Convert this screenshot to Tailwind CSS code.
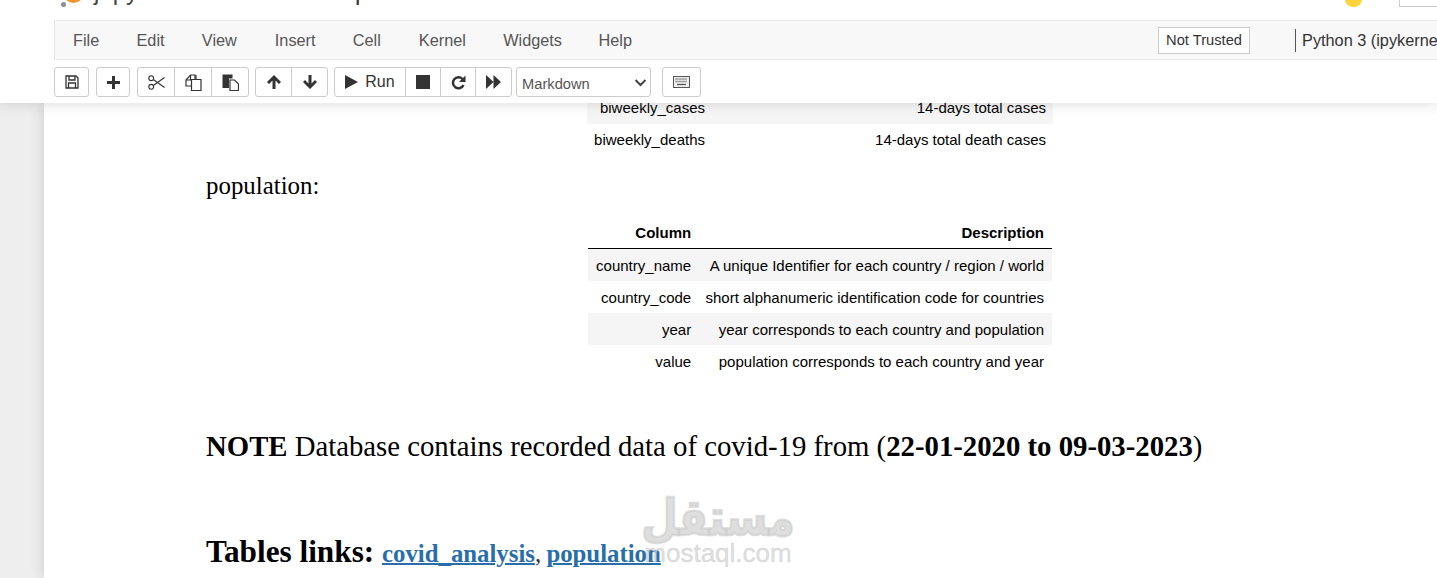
<!doctype html>
<html>
<head>
    <meta charset="UTF-8" />
    <script src="https://cdn.jsdelivr.net/npm/@tailwindcss/browser@4"></script>
    <title>Notebook</title>
</head>
<body class="h-[578px] w-[1437px] overflow-hidden bg-[#eeeeee] font-['Liberation_Sans',sans-serif] text-black">
<div class="relative flex h-[578px] flex-col overflow-hidden">
    <header class="relative z-10 h-[103px] shrink-0 overflow-hidden bg-white shadow-[0_0_12px_1px_rgba(87,87,87,0.2)]">
        <div class="relative flex h-[20px] items-start overflow-hidden">
            <div class="relative ml-[60px] h-[20px] w-[30px] overflow-hidden">
                <span class="absolute left-[4px] top-[-16px] h-[19px] w-[19px] rounded-full bg-[#f0962a]"></span>
                <span class="absolute left-[1px] top-[2px] h-[5px] w-[5px] rounded-full bg-[#8e8a96]"></span>
            </div>
            <span class="ml-[4px] mt-[-20px] text-[24px] leading-[24px] text-[#444]">jupyter</span>
            <span class="ml-[189px] mt-[-20px] text-[24px] leading-[24px] text-[#333]">p</span>
            <span class="ml-auto mr-[37px] mt-[-9px] h-[16px] w-[17px] rounded-full bg-[#ffd43b]"></span>
            <span class="mr-[-1px] mt-[-10px] h-[17px] w-[39px] border border-[#ccc] bg-white"></span>
        </div>
        <nav class="ml-[54px] flex h-[40px] items-center border-y border-l border-[#e7e7e7] bg-[#f8f8f8] text-[16.3px] text-[#555]">
            <span class="ml-[18px] mt-[1px]">File</span>
            <span class="ml-[37.25px] mt-[1px]">Edit</span>
            <span class="ml-[37.25px] mt-[1px]">View</span>
            <span class="ml-[38px] mt-[1px]">Insert</span>
            <span class="ml-[37.25px] mt-[1px]">Cell</span>
            <span class="ml-[38px] mt-[1px]">Kernel</span>
            <span class="ml-[37.25px] mt-[1px]">Widgets</span>
            <span class="ml-[36.5px] mt-[1px]">Help</span>
            <span class="ml-[526px] flex h-[27px] w-[92px] shrink-0 items-center justify-center border border-[#cccccc] bg-white text-[14.7px] text-[#333]">Not Trusted</span>
            <span class="ml-[45px] h-[23px] w-px shrink-0 bg-[#555]"></span>
            <span class="ml-[6px] whitespace-nowrap text-[#333]">Python 3 (ipykernel)</span>
        </nav>
        <div class="ml-[54px] mt-[7px] flex h-[30px] items-stretch text-[#333]">
            <div class="flex w-[35px] items-center justify-center rounded-[3px] border border-[#ccc]">
                <svg width="14" height="14" viewBox="0 0 14 14" fill="none" stroke="#333" stroke-width="1.3"><path d="M1 1h10l2 2v10H1z"/><path d="M4 1v4h6V1M3.500 13V8h7v5"/></svg>
            </div>
            <div class="ml-[7px] flex w-[34px] items-center justify-center rounded-[3px] border border-[#ccc]">
                <svg width="13" height="13" viewBox="0 0 13 13" fill="#333"><path d="M5 0h3v5h5v3H8v5H5V8H0V5h5z"/></svg>
            </div>
            <div class="ml-[7px] flex w-[112px] rounded-[3px] border border-[#ccc]">
                <div class="flex flex-1 items-center justify-center border-r border-[#ccc]">
                    <svg width="17" height="15" viewBox="0 0 17 15" fill="none" stroke="#333" stroke-width="1.100"><circle cx="3.200" cy="3.200" r="2.400"/><circle cx="3.200" cy="11.800" r="2.400"/><path d="M5.300 4.500 16.500 12.500M5.300 10.500 16.500 2.500"/></svg>
                </div>
                <div class="flex flex-1 items-center justify-center border-r border-[#ccc]">
                    <svg width="17" height="17" viewBox="0 0 17 17" fill="none" stroke="#333" stroke-width="1.200"><path d="M6.500 12H1V6l4.500-5H10v4"/><path d="M5.500 1v5H1"/><path d="M6.500 5.500H12l4 0v11H6.500z"/><path d="M11 1v4.500"/></svg>
                </div>
                <div class="flex flex-1 items-center justify-center">
                    <svg width="17" height="17" viewBox="0 0 17 17"><path d="M0.500 0.500h10v4H7v9.500H0.500z" fill="#333"/><path d="M8 6h4.500L16.500 10v6.500H8z" fill="#fff" stroke="#333" stroke-width="1.200"/></svg>
                </div>
            </div>
            <div class="ml-[6px] flex w-[73px] rounded-[3px] border border-[#ccc]">
                <div class="flex flex-1 items-center justify-center border-r border-[#ccc]">
                    <svg width="14" height="14" viewBox="0 0 14 14" fill="#333"><path d="M7 0l7 7-2 2-3.500-3.500V14h-3V5.500L2 9 0 7z"/></svg>
                </div>
                <div class="flex flex-1 items-center justify-center">
                    <svg width="14" height="14" viewBox="0 0 14 14" fill="#333"><path d="M7 14l7-7-2-2-3.500 3.500V0h-3v8.500L2 5 0 7z"/></svg>
                </div>
            </div>
            <div class="ml-[6px] flex w-[178px] rounded-[3px] border border-[#ccc]">
                <div class="flex w-[71px] items-center justify-center gap-[7px] border-r border-[#ccc] text-[16px]">
                    <svg width="13" height="14" viewBox="0 0 13 14" fill="#333"><path d="M0 0l13 7-13 7z"/></svg>
                    <span>Run</span>
                </div>
                <div class="flex w-[35px] items-center justify-center border-r border-[#ccc]">
                    <span class="h-[14px] w-[14px] bg-[#333]"></span>
                </div>
                <div class="flex w-[35px] items-center justify-center border-r border-[#ccc]">
                    <svg width="15" height="15" viewBox="0 0 15 15" fill="none" stroke="#333" stroke-width="2.500"><path d="M12.500 10A5.500 5.500 0 1 1 11.500 4"/><path d="M14.500 0.500v6.500H8z" fill="#333" stroke="none"/></svg>
                </div>
                <div class="flex flex-1 items-center justify-center">
                    <svg width="15" height="14" viewBox="0 0 15 14" fill="#333"><path d="M0 0l7.500 7L0 14zM7.500 0l7.500 7-7.500 7z"/></svg>
                </div>
            </div>
            <div class="ml-[4px] flex w-[135px] items-center justify-between rounded-[3px] border border-[#ccc] pl-[5px] pr-[3px] text-[14.7px] text-[#555]">
                <span class="mt-[5px]">Markdown</span>
                <svg class="mt-[1px]" width="13" height="8" viewBox="0 0 13 8" fill="none" stroke="#444" stroke-width="2"><path d="M1.500 1 6.500 6l5-5"/></svg>
            </div>
            <div class="ml-[11px] flex w-[39px] items-center justify-center rounded-[3px] border border-[#ccc]">
                <svg width="17" height="12" viewBox="0 0 17 12" fill="none" stroke="#555"><rect x="0.500" y="0.500" width="16" height="11" fill="#eee"/><path d="M2.500 3h12M2.500 5.500h12" stroke-dasharray="1 1" stroke-width="1.300"/><path d="M4 8.500h9" stroke-width="1.300"/></svg>
            </div>
        </div>
    </header>

    <main class="ml-[44px] min-h-0 flex-1 overflow-hidden bg-white pl-[162px] shadow-[0_0_12px_1px_rgba(87,87,87,0.2)]">
        <table class="ml-[381px] mt-[-11px] w-[466px] text-[15px] leading-[20px]">
            <tbody>
                <tr class="h-[32px] bg-[#f5f5f5]">
                    <td class="w-[125px] whitespace-nowrap px-[7px] text-right">biweekly_cases</td>
                    <td class="px-[7px] text-right">14-days total cases</td>
                </tr>
                <tr class="h-[32px]">
                    <td class="w-[125px] whitespace-nowrap px-[7px] text-right">biweekly_deaths</td>
                    <td class="px-[7px] text-right">14-days total death cases</td>
                </tr>
            </tbody>
        </table>
        <p class="mt-[15px] font-['Liberation_Serif',serif] text-[24.9px] leading-[30px]">population:</p>
        <table class="ml-[382px] mt-[17px] w-[464px] whitespace-nowrap text-[15px] leading-[20px]">
            <thead>
                <tr class="h-[30px] border-b border-black font-bold">
                    <th class="px-[8px] text-right">Column</th>
                    <th class="pl-[6px] pr-[8px] text-right">Description</th>
                </tr>
            </thead>
            <tbody>
                <tr class="h-[33px] bg-[#f5f5f5]">
                    <td class="px-[8px] pt-[2px] text-right">country_name</td>
                    <td class="pl-[6px] pr-[8px] pt-[2px] text-right">A unique Identifier for each country / region / world</td>
                </tr>
                <tr class="h-[32px]">
                    <td class="px-[8px] pt-[2px] text-right">country_code</td>
                    <td class="pl-[6px] pr-[8px] pt-[2px] text-right">short alphanumeric identification code for countries</td>
                </tr>
                <tr class="h-[32px] bg-[#f5f5f5]">
                    <td class="px-[8px] pt-[2px] text-right">year</td>
                    <td class="pl-[6px] pr-[8px] pt-[2px] text-right">year corresponds to each country and population</td>
                </tr>
                <tr class="h-[32px]">
                    <td class="px-[8px] pt-[2px] text-right">value</td>
                    <td class="pl-[6px] pr-[8px] pt-[2px] text-right">population corresponds to each country and year</td>
                </tr>
            </tbody>
        </table>
        <p class="mt-[51px] whitespace-nowrap font-['Liberation_Serif',serif] text-[28.75px] leading-[36px]"><b>NOTE</b> Database contains recorded data of covid-19 from (<b>22-01-2020 to 09-03-2023</b>)</p>
        <p class="mt-[68px] whitespace-nowrap font-['Liberation_Serif',serif] text-[31.25px] font-bold leading-[40px]">Tables links: <span class="text-[24.8px]"><a class="text-[#296eaa] underline decoration-2">covid_analysis</a><span class="mr-[-1px] font-normal text-[#333]">,</span> <a class="text-[#296eaa] underline decoration-2">population</a></span></p>
    </main>

    <div class="pointer-events-none absolute left-[643px] top-[491px] z-20 flex w-[150px] flex-col items-center text-[#cfcfcf]/70">
        <span class="scale-y-120 font-['DejaVu_Sans',sans-serif] text-[42px] font-bold leading-[54px] [-webkit-text-stroke:2px_#cfcfcfb3]">مستقل</span>
        <span class="mt-[-5px] whitespace-nowrap text-[26px] leading-[26px] [-webkit-text-stroke:0.5px_#cfcfcfb3]">mostaql.com</span>
    </div>
</div>
</body>
</html>
